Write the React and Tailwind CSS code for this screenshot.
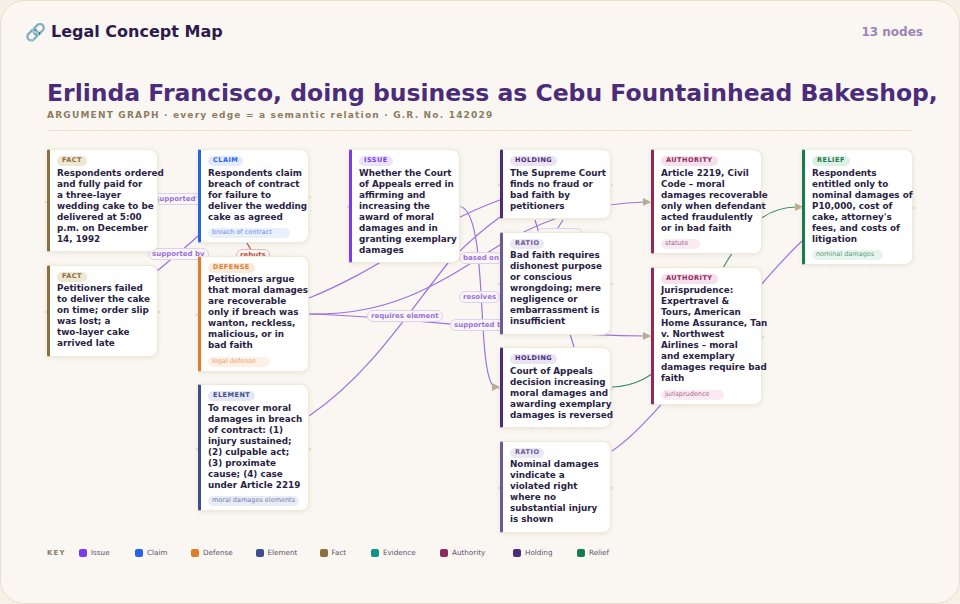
import React from 'react';

const columns = [
  [
    { kind: 'fact', lines: ['Respondents ordered', 'and fully paid for', 'a three-layer', 'wedding cake to be', 'delivered at 5:00', 'p.m. on December', '14, 1992'] },
    { kind: 'fact', lines: ['Petitioners failed', 'to deliver the cake', 'on time; order slip', 'was lost; a', 'two-layer cake', 'arrived late'] },
  ],
  [
    { kind: 'claim', lines: ['Respondents claim', 'breach of contract', 'for failure to', 'deliver the wedding', 'cake as agreed'], tag: 'breach of contract', tagWidth: 'w-[82px]' },
    { kind: 'defense', lines: ['Petitioners argue', 'that moral damages', 'are recoverable', 'only if breach was', 'wanton, reckless,', 'malicious, or in', 'bad faith'], tag: 'legal defense', tagWidth: 'w-[62px]' },
    { kind: 'element', lines: ['To recover moral', 'damages in breach', 'of contract: (1)', 'injury sustained;', '(2) culpable act;', '(3) proximate', 'cause; (4) case', 'under Article 2219'], tag: 'moral damages elements', tagWidth: 'w-[91px]' },
  ],
  [
    { kind: 'issue', lines: ['Whether the Court', 'of Appeals erred in', 'affirming and', 'increasing the', 'award of moral', 'damages and in', 'granting exemplary', 'damages'] },
  ],
  [
    { kind: 'holding', lines: ['The Supreme Court', 'finds no fraud or', 'bad faith by', 'petitioners'] },
    { kind: 'ratio', lines: ['Bad faith requires', 'dishonest purpose', 'or conscious', 'wrongdoing; mere', 'negligence or', 'embarrassment is', 'insufficient'] },
    { kind: 'holding', lines: ['Court of Appeals', 'decision increasing', 'moral damages and', 'awarding exemplary', 'damages is reversed'] },
    { kind: 'ratio', lines: ['Nominal damages', 'vindicate a', 'violated right', 'where no', 'substantial injury', 'is shown'] },
  ],
  [
    { kind: 'authority', lines: ['Article 2219, Civil', 'Code – moral', 'damages recoverable', 'only when defendant', 'acted fraudulently', 'or in bad faith'], tag: 'statute', tagWidth: 'w-[39px]' },
    { kind: 'authority', lines: ['Jurisprudence:', 'Expertravel &', 'Tours, American', 'Home Assurance, Tan', 'v. Northwest', 'Airlines – moral', 'and exemplary', 'damages require bad', 'faith'], tag: 'jurisprudence', tagWidth: 'w-[63px]' },
  ],
  [
    { kind: 'relief', lines: ['Respondents', 'entitled only to', 'nominal damages of', 'P10,000, cost of', "cake, attorney's", 'fees, and costs of', 'litigation'], tag: 'nominal damages', tagWidth: 'w-[71px]' },
  ],
];

const kinds = {
  fact: { bar: 'border-l-[#8b6f3e]', badge: 'bg-[#efe6d3] text-[#8b6f3e]', tag: 'bg-[#efe6d3] text-[#8b6f3e]', label: 'FACT' },
  claim: { bar: 'border-l-[#2563eb]', badge: 'bg-[#e3eafd] text-[#2563eb]', tag: 'bg-[#e9effd] text-[#6b8fee]', label: 'CLAIM' },
  defense: { bar: 'border-l-[#e07b2a]', badge: 'bg-[#fcebdc] text-[#e07b2a]', tag: 'bg-[#fdf0e5] text-[#e9a26a]', label: 'DEFENSE' },
  element: { bar: 'border-l-[#3b4f8f]', badge: 'bg-[#e5e8f3] text-[#3b4f8f]', tag: 'bg-[#eaecf5] text-[#6d7dae]', label: 'ELEMENT' },
  issue: { bar: 'border-l-[#7c3aed]', badge: 'bg-[#ebe2fc] text-[#7c3aed]', tag: '', label: 'ISSUE' },
  holding: { bar: 'border-l-[#4a2c7a]', badge: 'bg-[#e9e3f2] text-[#4a2c7a]', tag: '', label: 'HOLDING' },
  ratio: { bar: 'border-l-[#6b5b95]', badge: 'bg-[#ece8f3] text-[#6b5b95]', tag: '', label: 'RATIO' },
  authority: { bar: 'border-l-[#8b2c5e]', badge: 'bg-[#f8dfec] text-[#8b2c5e]', tag: 'bg-[#faeaf2] text-[#a8648b]', label: 'AUTHORITY' },
  relief: { bar: 'border-l-[#1a7a4f]', badge: 'bg-[#deefe7] text-[#1a7a4f]', tag: 'bg-[#e8f4ee] text-[#5ba283]', label: 'RELIEF' },
};

const edgeLabels = [
  { text: 'supported by', pos: 'left-[151px] top-[193px]' },
  { text: 'supported by', pos: 'left-[148px] top-[248px]' },
  { text: 'rebuts', pos: 'left-[236px] top-[249px]', red: true },
  { text: 'based on', pos: 'left-[459px] top-[252px]' },
  { text: 'resolves', pos: 'left-[459px] top-[291px]' },
  { text: 'requires element', pos: 'left-[367px] top-[310px]' },
  { text: 'supported by', pos: 'left-[450px] top-[319px]' },
];

const legend = [
  { name: 'Issue', color: 'bg-[#7c3aed]', w: 'w-[56px]' },
  { name: 'Claim', color: 'bg-[#2563eb]', w: 'w-[56px]' },
  { name: 'Defense', color: 'bg-[#e07b2a]', w: 'w-[64.5px]' },
  { name: 'Element', color: 'bg-[#3b4f8f]', w: 'w-[64px]' },
  { name: 'Fact', color: 'bg-[#8b6f3e]', w: 'w-[51.5px]' },
  { name: 'Evidence', color: 'bg-[#0d9488]', w: 'w-[69px]' },
  { name: 'Authority', color: 'bg-[#8b2c5e]', w: 'w-[73px]' },
  { name: 'Holding', color: 'bg-[#4a2c7a]', w: 'w-[64px]' },
  { name: 'Relief', color: 'bg-[#1a7a4f]', w: 'w-[40px]' },
];

const Card = ({ kind, lines, tag, tagWidth }) => {
  const style = kinds[kind];
  return (
    <div className={`relative w-[111px] rounded-l-[2px] rounded-r-[8px] border border-[#efe9da] border-l-[3px] ${style.bar} bg-white pl-[7px] pt-[6px] pb-[6.5px] shadow-[0_1px_5px_rgba(90,70,30,0.1)]`}>
      <span className="absolute left-[-5px] top-1/2 h-[2px] w-[2px] rounded-full bg-[#d8d0bd]" />
      <span className="absolute right-[-3px] top-1/2 h-[2px] w-[2px] rounded-full bg-[#d8d0bd]" />
      <div className={`flex h-[10px] w-fit items-center rounded-full px-[5px] text-[6.5px] font-bold tracking-[0.5px] ${style.badge}`}>
        {style.label}
      </div>
      <div className="mt-[1.5px] whitespace-nowrap text-[8.8px] leading-[11px] font-bold text-[#2a1f44]">
        {lines.map((line) => (
          <div key={line}>{line}</div>
        ))}
      </div>
      {tag && (
        <div className={`mt-[5.5px] -mb-[2.5px] flex h-[10px] items-center rounded-full px-[4px] text-[6.5px] whitespace-nowrap ${tagWidth} ${style.tag}`}>
          {tag}
        </div>
      )}
    </div>
  );
};

const Edges = () => (
  <svg className="absolute left-0 top-0 h-[604px] w-[960px]" viewBox="0 0 960 604" fill="none">
    <g stroke="#9b72e0" strokeWidth="1.2">
      <path d="M157 200 L198 200" />
      <path d="M157 271 C175 256 185 248 198 236" />
      <path d="M309 298 C380 270 430 225 500 200" />
      <path d="M309 314 C400 316 450 275 500 245 C550 215 600 203 645 202" />
      <path d="M309 314 C400 316 520 335 645 336" />
      <path d="M309 416 C370 375 410 310 448 263 C465 245 485 228 500 217" />
      <path d="M459 206 C490 210 475 370 494 387" />
      <path d="M535 220 L574 347" />
      <path d="M563 220 L550 240" />
      <path d="M612 451 C660 420 740 300 802 241" />
    </g>
    <path d="M612 387 C680 385 700 300 731 255 C745 225 770 207 796 207" stroke="#3f8f68" strokeWidth="1.2" />
    <path d="M244 238 L254 255" stroke="#b85050" strokeWidth="1.2" />
    <g fill="#b8ac93">
      <path d="M492 383 L500 387 L492 391 Z" />
      <path d="M643 198 L651 202 L643 206 Z" />
      <path d="M643 332 L651 336 L643 340 Z" />
      <path d="M795 203 L803 207 L795 211 Z" />
    </g>
  </svg>
);

const App = () => {
  return (
    <div className="h-[604px] w-[960px] bg-[#f6f1e6]">
      <div className="relative h-[604px] w-[960px] overflow-hidden rounded-[24px] border border-[#e6dfca] bg-[#faf7f2] bg-[radial-gradient(#f6f2ea_1px,transparent_1px)] bg-[size:20px_20px] font-['DejaVu_Sans',sans-serif]">
        <div className="flex h-[24px] items-center justify-between pl-[24px] pr-[36px] mt-[19px]">
          <div className="flex items-center gap-[6px] text-[16px] leading-[24px] font-bold text-[#2d1b4e]">
            <span className="w-[20px] text-[17px]">🔗</span>
            <span>Legal Concept Map</span>
          </div>
          <div className="text-[12px] font-bold text-[#9b84b8]">13 nodes</div>
        </div>

        <div className="mx-[46px] mt-[33px]">
          <h1 className="whitespace-nowrap text-[23.5px] font-bold leading-[32px] text-[#4a2c7a]">
            Erlinda Francisco, doing business as Cebu Fountainhead Bakeshop,
          </h1>
          <p className="-mt-[1px] text-[9px] leading-[14px] font-bold tracking-[1.2px] text-[#8b7d62]">
            ARGUMENT GRAPH · every edge = a semantic relation · G.R. No. 142029
          </p>
          <div className="mt-[8px] h-[1px] w-[866px] bg-[#e9e2d0]" />
        </div>

        {/* edge layer sits behind the cards, coordinates are page pixels */}
        <div className="absolute left-[-1px] top-[-1px] h-[604px] w-[960px]">
          <Edges />
          {edgeLabels.map((label, i) => (
            <div
              key={i}
              className={`absolute flex h-[12px] items-center rounded-full border bg-[#faf7f2] px-[3px] text-[7px] font-bold whitespace-nowrap ${label.pos} ${label.red ? 'border-[#e5b8b8] text-[#b85050]' : 'border-[#ddd0f5] text-[#9b72e0]'}`}
            >
              {label.text}
            </div>
          ))}
          {/* pill hidden behind the ratio card, only its top edge shows */}
          <div className="absolute left-[537px] top-[228px] h-[12px] w-[46px] rounded-full border border-[#ddd0f5] bg-[#faf7f2]" />
        </div>

        <div className="relative mx-[46px] mt-[18px] flex h-[384px] items-start gap-[40px]">
          {columns.map((cards, i) => (
            <div key={i} className="flex flex-col gap-[12.5px]">
              {cards.map((card) => (
                <Card key={card.lines[0]} {...card} />
              ))}
            </div>
          ))}
        </div>

        <div className="mx-[46px] mt-[15px] flex items-center">
          <span className="w-[32px] text-[7px] font-bold tracking-[1.2px] text-[#8b7d62]">KEY</span>
          {legend.map((item) => (
            <div key={item.name} className={`flex items-center gap-[4px] ${item.w}`}>
              <span className={`h-[8px] w-[8px] rounded-[2px] ${item.color}`} />
              <span className="text-[7.2px] text-[#5a5070]">{item.name}</span>
            </div>
          ))}
        </div>
      </div>
    </div>
  );
};

export default App;
